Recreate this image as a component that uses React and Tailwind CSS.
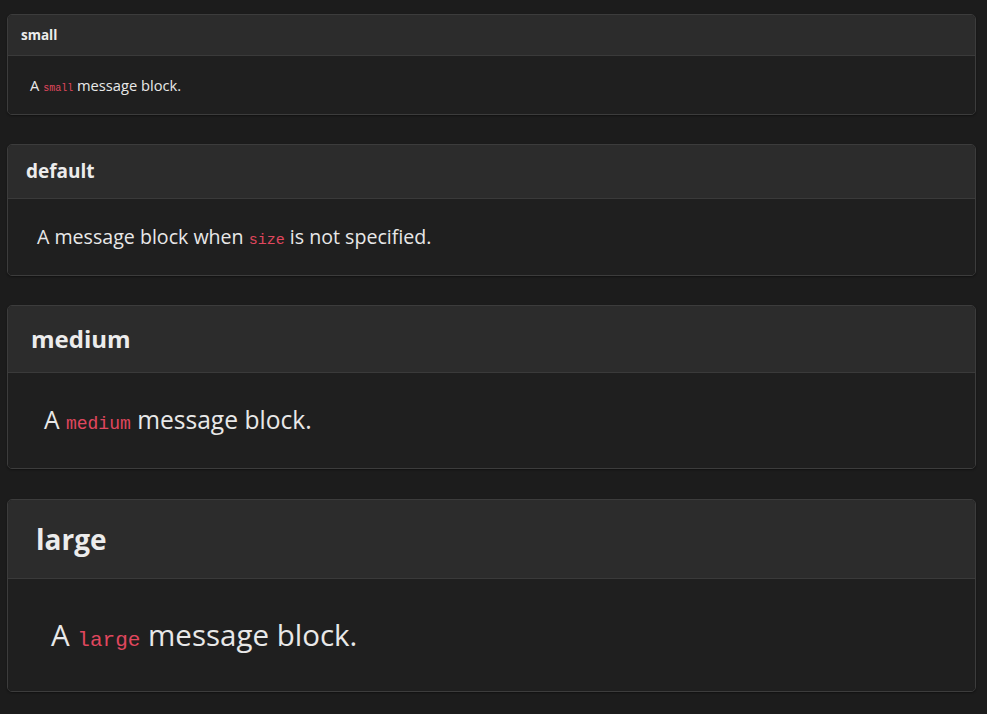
import React from 'react';

const blocks = [
  {
    title: 'small',
    head: 'h-[41px] pl-[13px] text-[13.5px]',
    body: 'h-[58px] pl-[22px] text-[14.7px]',
    code: 'text-[10px]',
    pre: 'A',
    word: 'small',
    post: 'message block.',
    gap: 'mb-[29px]',
  },
  {
    title: 'default',
    head: 'h-[54px] pl-[18px] text-[19px]',
    body: 'h-[76px] pl-[29px] text-[19.6px]',
    code: 'text-[15px]',
    pre: 'A message block when',
    word: 'size',
    post: 'is not specified.',
    gap: 'mb-[29px]',
  },
  {
    title: 'medium',
    head: 'h-[67px] pl-[23px] text-[24px]',
    body: 'h-[95px] pl-[36px] text-[24.6px]',
    code: 'text-[18px]',
    pre: 'A',
    word: 'medium',
    post: 'message block.',
    gap: 'mb-[30px]',
  },
  {
    title: 'large',
    head: 'h-[79px] pl-[28px] text-[28px]',
    body: 'h-[112px] pl-[43px] text-[29.5px]',
    code: 'text-[21px]',
    pre: 'A',
    word: 'large',
    post: 'message block.',
    gap: 'mb-[22px]',
  },
];

function MessageBlock({ b }) {
  return (
    <div className={`border border-[#3c3c3c] rounded-[5px] overflow-hidden shadow-[0_1px_2px_rgba(0,0,0,0.4)] ${b.gap}`}>
      {/* header */}
      <div className={`flex items-center bg-[#2c2c2c] border-b border-[#3a3a3a] font-bold text-[#ececec] ${b.head}`}>
        {b.title}
      </div>
      {/* body */}
      <div className={`flex items-center bg-[#1f1f1f] text-[#e8e8e8] ${b.body}`}>
        <p className="whitespace-pre">
          {b.pre}{' '}
          <code className={`text-[#e0475e] ${b.code}`} style={{ fontFamily: '"Liberation Mono", monospace' }}>
            {b.word}
          </code>{' '}
          {b.post}
        </p>
      </div>
    </div>
  );
}

export default function App() {
  return (
    <div
      className="min-h-[714px] bg-[#1c1c1c] pt-[14px] pl-[7px] pr-[11px]"
      style={{ fontFamily: '"Open Sans", "Noto Sans", sans-serif' }}
    >
      {blocks.map((b) => (
        <MessageBlock key={b.title} b={b} />
      ))}
    </div>
  );
}
